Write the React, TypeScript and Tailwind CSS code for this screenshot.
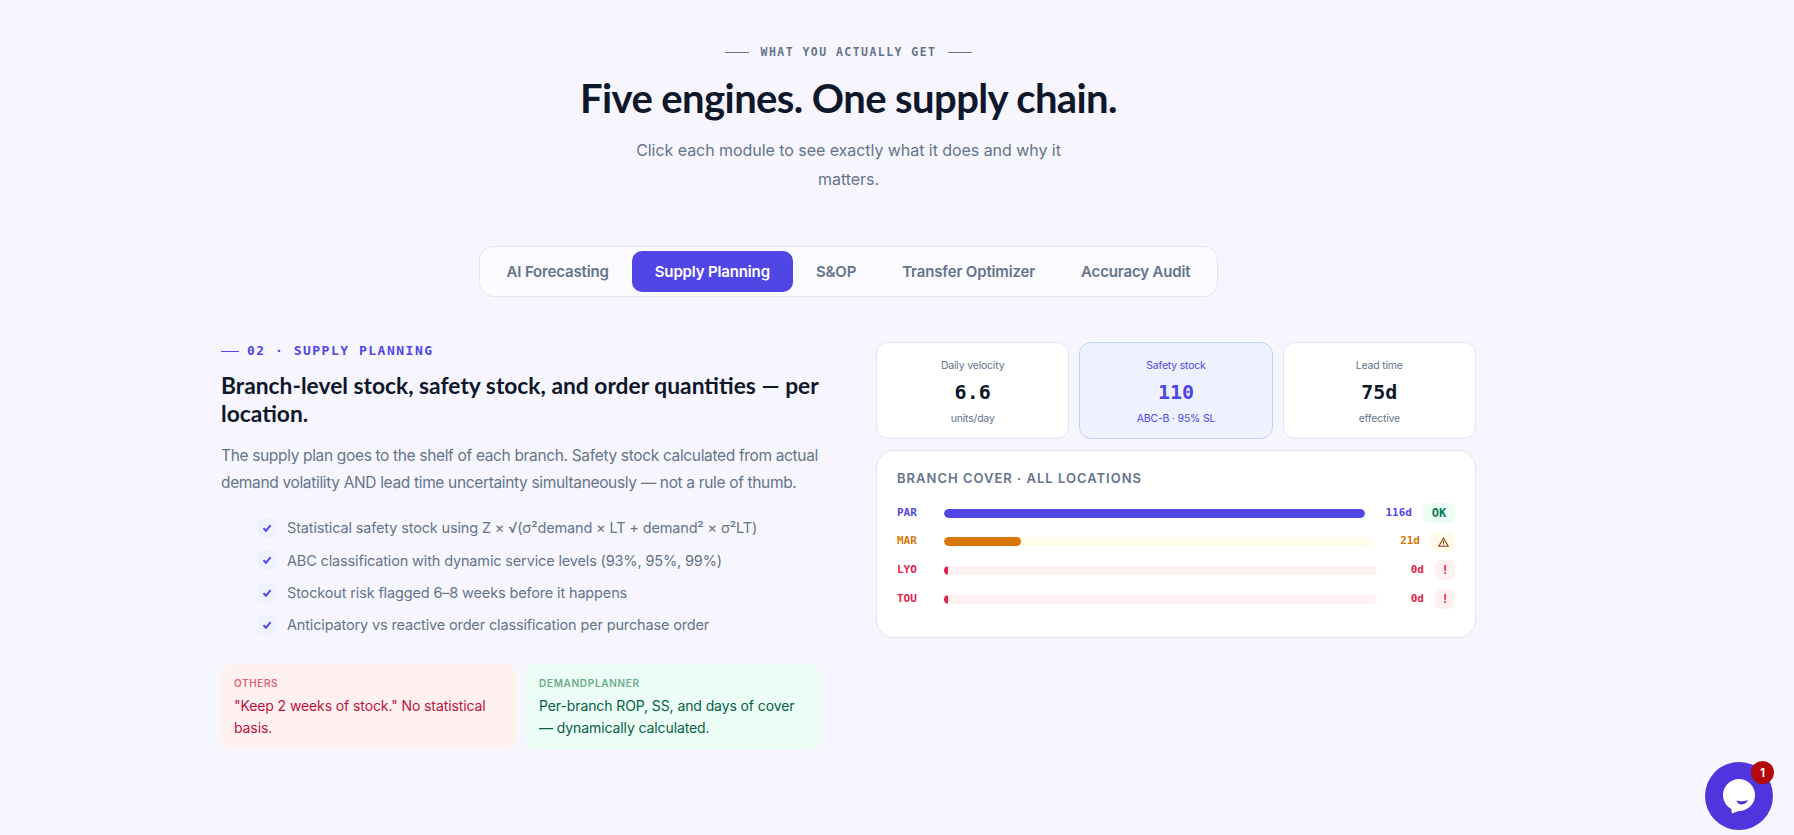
const sans = "font-['Inter','Noto_Sans',sans-serif]";
const mono = "font-['DejaVu_Sans_Mono','Liberation_Mono',monospace]";
const display = "font-['Lato','Noto_Sans',sans-serif]";

const tabs = ["AI Forecasting", "Supply Planning", "S&OP", "Transfer Optimizer", "Accuracy Audit"];

const checks = [
  "Statistical safety stock using Z × √(σ²demand × LT + demand² × σ²LT)",
  "ABC classification with dynamic service levels (93%, 95%, 99%)",
  "Stockout risk flagged 6–8 weeks before it happens",
  "Anticipatory vs reactive order classification per purchase order",
];

const WarnIcon = () => (
  <svg width="11" height="10" viewBox="0 0 11 10" fill="none" stroke="#92400e" strokeWidth="1.1">
    <path d="M5.500 1 10.200 9.300H.8Z" />
    <path d="M5.500 3.800v3M5.500 7.500v1" />
  </svg>
);

const branches = [
  { code: "PAR", days: "116d", badge: "OK", fill: "w-full", fillColor: "bg-[#4f46e5]", track: "bg-[#eef2ff]", text: "text-[#4f46e5]", badgeBox: "w-8 bg-[#ecfdf5] text-[#047857]" },
  { code: "MAR", days: "21d", badge: <WarnIcon />, fill: "w-[18%]", fillColor: "bg-[#d97706]", track: "bg-[#fffbeb]", text: "text-[#d97706]", badgeBox: "w-6 bg-[#fffbeb] text-[#92400e]" },
  { code: "LYO", days: "0d", badge: "!", fill: "w-[4px]", fillColor: "bg-[#e11d48]", track: "bg-[#fff1f2]", text: "text-[#e11d48]", badgeBox: "w-5 bg-[#fff1f2] text-[#e11d48]" },
  { code: "TOU", days: "0d", badge: "!", fill: "w-[4px]", fillColor: "bg-[#e11d48]", track: "bg-[#fff1f2]", text: "text-[#e11d48]", badgeBox: "w-5 bg-[#fff1f2] text-[#e11d48]" },
];

const StatCard = ({ label, value, sub, active }: { label: string; value: string; sub: string; active?: boolean }) => (
  <div
    className={`flex h-[97px] flex-col items-center rounded-xl border pt-[15px] ${
      active ? "border-[#c7d2fe] bg-[#eef2ff]" : "border-[#e2e4f3] bg-white"
    }`}
  >
    <div className={`text-[10.5px] leading-4 tracking-[-0.2px] ${active ? "text-[#4f46e5]" : "text-[#64748b]"}`}>{label}</div>
    <div className={`${mono} mt-[4px] text-[20px] font-bold leading-7 ${active ? "text-[#4f46e5]" : "text-[#0f172a]"}`}>{value}</div>
    <div className={`mt-[5px] text-[10.5px] leading-4 tracking-[-0.2px] ${active ? "text-[#4f46e5]" : "text-[#64748b]"}`}>{sub}</div>
  </div>
);

const App = () => {
  return (
    <div className={`${sans} relative h-[835px] overflow-hidden bg-[#f7f6ff] pr-[97px]`}>
      <div className="flex flex-col items-center pt-11">
        <div className="flex items-center gap-3">
          <span className="h-px w-6 bg-[#64748b]" />
          <span className={`${mono} text-[11.5px] font-bold leading-4 tracking-[1.45px] text-[#64748b]`}>WHAT YOU ACTUALLY GET</span>
          <span className="h-px w-6 bg-[#64748b]" />
        </div>
        <h1 className={`${display} mt-[12px] text-[40px] font-bold leading-[52px] tracking-[-0.6px] text-[#0f172a]`}>
          Five engines. One supply chain.
        </h1>
        <p className="mt-[12px] w-[440px] text-center text-[16px] leading-[29px] tracking-[-0.05px] text-[#64748b]">
          Click each module to see exactly what it does and why it matters.
        </p>

        <div className="mt-[52px] flex h-[51px] items-center rounded-[14px] border border-[#e2e4f3] bg-[#fafaff] px-1">
          {tabs.map((tab) => (
            <div
              key={tab}
              className={`flex h-[41px] items-center rounded-[10px] px-[23px] pt-px text-[15px] font-semibold tracking-[-0.15px] ${
                tab === "Supply Planning" ? "bg-[#4f46e5] text-white" : "text-[#64748b]"
              }`}
            >
              {tab}
            </div>
          ))}
        </div>
      </div>

      <div className="mx-auto mt-[46px] grid w-[1255px] grid-cols-[600px_600px] justify-between">
        <div>
          <div className="flex h-4 items-center gap-2">
            <span className="h-px w-[18px] bg-[#4f46e5]" />
            <span className={`${mono} text-[13px] font-bold tracking-[1.5px] text-[#4f46e5]`}>02 · SUPPLY PLANNING</span>
          </div>
          <h2 className={`${display} mt-[12px] text-[22.8px] font-bold leading-[28px] text-[#0f172a]`}>
            Branch-level stock, safety stock, and order quantities — per location.
          </h2>
          <p className="mt-[15px] text-[15.5px] leading-[27px] tracking-[-0.34px] text-[#64748b]">
            The supply plan goes to the shelf of each branch. Safety stock calculated from actual demand volatility AND lead time uncertainty simultaneously — not a rule of thumb.
          </p>
          <ul className="mt-[22px] flex flex-col gap-[12.4px] pl-9">
            {checks.map((check) => (
              <li key={check} className="flex h-5 items-center gap-[10px] text-[14.5px] tracking-[-0.15px] text-[#64748b]">
                <span className="flex h-5 w-5 items-center justify-center rounded-md bg-[#eef2ff]">
                  <svg width="10" height="10" viewBox="0 0 10 10" fill="none" stroke="#4f46e5" strokeWidth="2">
                    <path d="M1.500 5.200 4 7.800 8.600 2.200" />
                  </svg>
                </span>
                {check}
              </li>
            ))}
          </ul>
          <div className="mt-[29px] grid grid-cols-[296px_295px] justify-between">
            <div className="h-[86px] rounded-xl bg-[#fff1f0] px-[13px] pt-[11px]">
              <div className="text-[10px] font-semibold leading-4 tracking-[0.6px] text-[#e0637f]">OTHERS</div>
              <div className="mt-[4px] text-[14px] leading-[22px] tracking-[-0.1px] text-[#be123c]">
                "Keep 2 weeks of stock." No statistical basis.
              </div>
            </div>
            <div className="h-[86px] rounded-xl bg-[#ecfdf5] px-[13px] pt-[11px]">
              <div className="text-[10px] font-semibold leading-4 tracking-[0.7px] text-[#6bab8f]">DEMANDPLANNER</div>
              <div className="mt-[4px] text-[14px] leading-[22px] tracking-[-0.1px] text-[#065f46]">
                Per-branch ROP, SS, and days of cover — dynamically calculated.
              </div>
            </div>
          </div>
        </div>

        <div className="-mt-[1px] flex flex-col gap-[11px]">
          <div className="grid grid-cols-3 gap-[10px]">
            <StatCard label="Daily velocity" value="6.6" sub="units/day" />
            <StatCard label="Safety stock" value="110" sub="ABC-B · 95% SL" active />
            <StatCard label="Lead time" value="75d" sub="effective" />
          </div>
          <div className="h-[188px] rounded-[18px] border border-[#e2e4f3] bg-white px-5 pt-[19px]">
            <div className="text-[13px] font-semibold leading-4 tracking-[1px] text-[#64748b]">BRANCH COVER · ALL LOCATIONS</div>
            <div className="mt-[17px] flex flex-col gap-[8.7px]">
              {branches.map((row) => (
                <div key={row.code} className="flex h-5 items-center">
                  <span className={`${mono} w-[47px] text-[11px] font-bold ${row.text}`}>{row.code}</span>
                  <div className={`h-[9px] flex-1 overflow-hidden rounded-full ${row.track}`}>
                    <div className={`h-full rounded-full ${row.fill} ${row.fillColor}`} />
                  </div>
                  <span className={`${mono} w-[47px] text-right text-[11px] font-bold ${row.text}`}>{row.days}</span>
                  <span className={`${mono} ml-[11px] flex h-5 items-center justify-center rounded-md text-[12px] font-bold ${row.badgeBox}`}>
                    {row.badge}
                  </span>
                </div>
              ))}
            </div>
          </div>
        </div>
      </div>

      {/* chat launcher */}
      <div className="absolute left-[1705px] top-[762px] flex h-[68px] w-[68px] items-center justify-center rounded-full bg-[#4f35dd]">
        <svg width="40" height="40" viewBox="0 0 40 40">
          <circle cx="20" cy="19" r="16" fill="#fff" />
          <path d="M12 32 13 37.500 21 34.500Z" fill="#fff" />
          <path d="M17.500 24.500C21 25.500 25 25.500 29 24 27 28 24 28.500 22 28.500 20 28.500 18.500 27 17.500 24.500Z" fill="#4f35dd" />
        </svg>
        <span className="absolute -right-[1px] -top-[1px] flex h-[23px] w-[23px] items-center justify-center rounded-full bg-[#b50a0a] text-[12px] font-semibold text-white">
          1
        </span>
      </div>
    </div>
  );
};

export default App;
